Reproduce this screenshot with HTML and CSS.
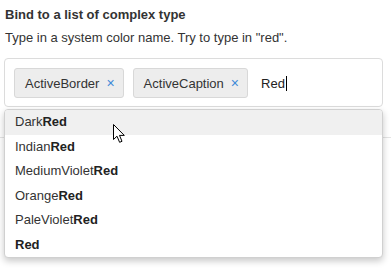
FILE: index.html
```html
<!DOCTYPE html>
<html>
<head>
<meta charset="utf-8">
<link rel="stylesheet" href="styles.css">
</head>
<body>
<div class="demo">
  <h3 class="title">Bind to a list of complex type</h3>
  <p class="hint">Type in a system color name. Try to type in "red".</p>
  <div class="picker">
    <div class="field">
      <span class="tag">ActiveBorder <span class="x">×</span></span>
      <span class="tag">ActiveCaption <span class="x">×</span></span>
      <span class="typed">Red<span class="caret"></span></span>
    </div>
    <ul class="popup">
      <li class="item hover">Dark<b>Red</b></li>
      <li class="item">Indian<b>Red</b></li>
      <li class="item">MediumViolet<b>Red</b></li>
      <li class="item">Orange<b>Red</b></li>
      <li class="item">PaleViolet<b>Red</b></li>
      <li class="item"><b>Red</b></li>
    </ul>
    <svg class="pointer" width="13" height="20" viewBox="0 0 13 20"><path d="M0.5 0.5 L0.5 15.5 L4 12.2 L6.6 18.3 L9 17.3 L6.5 11.4 L11.3 11.4 Z" fill="#fff" stroke="#000" stroke-width="1" stroke-linejoin="miter"/></svg>
  </div>
  <div class="sep"></div>
</div>
</body>
</html>
```
FILE: styles.css
```css
html, body { margin: 0; padding: 0; background: #fff; }
body {
  font-family: "Liberation Sans", Arial, sans-serif;
  font-size: 13px;
  color: #333;
  min-height: 280px;
}
.demo { padding: 5px 0 0 0; min-height: 275px; }
.title {
  margin: 0 0 0 5px;
  font-size: 13px;
  font-weight: bold;
  line-height: 20px;
}
.hint {
  margin: 5px 0 0 5px;
  line-height: 16px;
}
.picker {
  position: relative;
  margin: 12px 0 0 4px;
  width: 379px;
}
.field {
  box-sizing: border-box;
  height: 49px;
  border: 1px solid #dcdcdc;
  border-radius: 4px;
  padding: 9px 0 0 9px;
  display: flex;
  align-items: flex-start;
  gap: 9px;
}
.tag {
  box-sizing: border-box;
  height: 30px;
  display: flex;
  align-items: center;
  padding: 0 8px 0 10px;
  background: #ededed;
  border: 1px solid #d8d8d8;
  border-radius: 3px;
  color: #333;
  white-space: nowrap;
}
.x {
  color: #3f8ad8;
  margin-left: 7px;
  font-size: 14px;
}
.typed {
  display: flex;
  align-items: center;
  height: 30px;
  margin-left: 4px;
  color: #222;
}
.caret {
  display: inline-block;
  width: 1px;
  height: 15px;
  background: #000;
  margin-left: 1px;
}
.popup {
  position: absolute;
  left: 0;
  top: 51px;
  width: 379px;
  box-sizing: border-box;
  margin: 0;
  padding: 0;
  list-style: none;
  background: #fff;
  border: 1px solid #d0d0d0;
  border-radius: 4px;
  box-shadow: 0 3px 7px rgba(0,0,0,0.22);
  overflow: hidden;
  z-index: 2;
}
.item {
  height: 24.5px;
  line-height: 24.5px;
  padding-left: 10px;
  color: #333;
}
.item b { color: #222; }
.item.hover { background: #f0f0f0; }
.pointer {
  position: absolute;
  left: 109px;
  top: 66px;
  z-index: 3;
}
.sep {
  margin-top: 30px;
  height: 1px;
  background: #e4e4e4;
}
```
